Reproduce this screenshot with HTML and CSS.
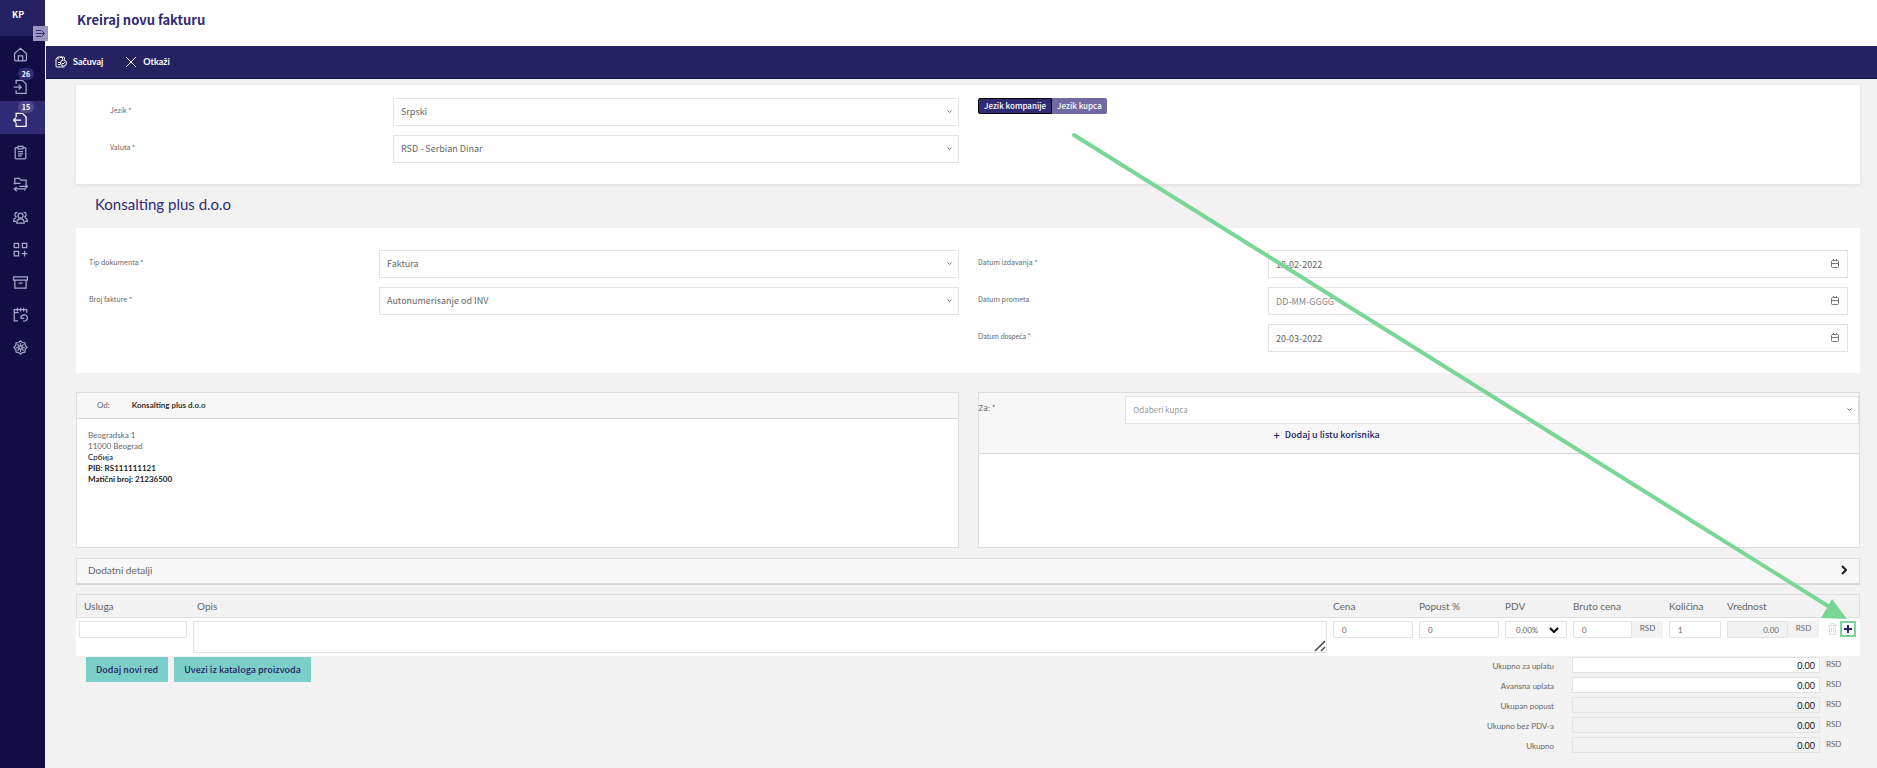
FILE: index.html
```html
<!DOCTYPE html>
<html lang="sr-Latn">
<head>
    <meta charset="UTF-8">
    <meta name="viewport" content="width=device-width, initial-scale=1.0">
    <title>Kreiraj novu fakturu</title>
    <link rel="stylesheet" href="styles.css">
</head>
<body>

    <!-- Sidebar -->
    <nav class="sidebar">
        <div class="brand">KP
            <button class="toggle" aria-label="Meni">
                <svg width="9" height="9" viewBox="0 0 9 9"><path d="M0 1.500h5M0 4.500h8M0 7.500h5M5.500 1.500l3 3-3 3"/></svg>
            </button>
        </div>
        <a href="#" class="nav-item" aria-label="Početna">
            <svg viewBox="0 0 24 24"><path d="M2.500 10.500L12 2l9.500 8.500V20a2 2 0 0 1-2 2h-15a2 2 0 0 1-2-2zM8.500 22v-8h7v8"/></svg>
        </a>
        <a href="#" class="nav-item" aria-label="Ulazne fakture">
            <svg viewBox="0 0 24 24"><path d="M5 8V2h10l6 6v15H5v-5M1 13h12M9 9l4 4-4 4"/></svg>
            <span class="badge">26</span>
        </a>
        <a href="#" class="nav-item active" aria-label="Izlazne fakture">
            <svg viewBox="0 0 24 24"><path d="M5 8V2h10l6 6v15H5v-5M13 13H1M5 9l-4 4 4 4"/></svg>
            <span class="badge">15</span>
        </a>
        <a href="#" class="nav-item" aria-label="Ponude">
            <svg viewBox="0 0 24 24"><path d="M8 4H5a1.500 1.500 0 0 0-1.500 1.500v15A1.500 1.500 0 0 0 5 22h14a1.500 1.500 0 0 0 1.500-1.500v-15A1.500 1.500 0 0 0 19 4h-3M8 2h8v4H8zM8 10.500h8M8 14h8M8 17.500h6"/></svg>
        </a>
        <a href="#" class="nav-item" aria-label="Dokumenti">
            <svg viewBox="0 0 24 24"><path d="M3 12V2h7l2 3h9v8M1 10h11M20 12l3 3-3 3M10 15h13M6 16l-4 3 4 4M2 19h17v3"/></svg>
        </a>
        <a href="#" class="nav-item" aria-label="Klijenti">
            <svg viewBox="0 0 24 24"><circle cx="12" cy="9" r="4"/><path d="M6 21c0-4 2-7 6-7s6 3 6 7zM7 4a3.500 3.500 0 1 0-1 7M17 4a3.500 3.500 0 1 1 1 7M5 12c-3 1-4 3-4 6h4M19 12c3 1 4 3 4 6h-4"/></svg>
        </a>
        <a href="#" class="nav-item" aria-label="Usluge">
            <svg viewBox="0 0 24 24"><path d="M2 2h7v7H2zM15 2h7v7h-7zM2 15h7v7H2zM18.500 14v9M14 18.500h9"/></svg>
        </a>
        <a href="#" class="nav-item" aria-label="Arhiva">
            <svg viewBox="0 0 24 24"><path d="M1 3h22v5H1zM3 8v13h18V8M9 13h6"/></svg>
        </a>
        <a href="#" class="nav-item" aria-label="Ponavljanja">
            <svg viewBox="0 0 24 24"><path d="M8 22H2V4h20v5M2 9h7M7 1v6M12 1v6M17 1v6M13 13v5h5M13 17a5 5 0 1 1 3 5"/></svg>
        </a>
        <a href="#" class="nav-item" aria-label="Podešavanja">
            <svg viewBox="0 0 24 24"><path d="M12 1.500l3 2.500 4 .500.500 4 3 3.500-3 3.500-.500 4-4 .500-3 2.500-3-2.500-4-.500-.500-4-3-3.500 3-3.500.500-4L9 4z"/><circle cx="12" cy="12" r="2.500"/><path d="M12 5v4M12 15v4M5 12h4M15 12h4M7 7l3 3M17 7l-3 3M7 17l3-3M17 17l-3-3"/></svg>
        </a>
    </nav>

    <div class="page">
        <header class="page-header">
            <h1>Kreiraj novu fakturu</h1>
        </header>

        <div class="toolbar">
            <button class="tool">
                <svg viewBox="0 0 24 24"><path d="M10 22H4a2 2 0 0 1-2-2V6l4-4h11a2 2 0 0 1 2 2v3M6 2v5M10 3h5v4M6 13h5M6 17h4"/><circle cx="17" cy="14" r="6"/><path d="M14 14l2 2 4-4M10 22h9"/></svg>
                Sačuvaj
            </button>
            <button class="tool">
                <svg viewBox="0 0 24 24"><path d="M2 2l20 20M22 2L2 22"/></svg>
                Otkaži
            </button>
        </div>

        <main class="content">
            <section class="card settings">
                <div class="column">
                    <div class="field">
                        <label for="language">Jezik *</label>
                        <select id="language"><option>Srpski</option></select>
                    </div>
                    <div class="field">
                        <label for="currency">Valuta *</label>
                        <select id="currency"><option>RSD - Serbian Dinar</option></select>
                    </div>
                </div>
                <div class="column">
                    <div class="switch">
                        <button class="selected">Jezik kompanije</button>
                        <button>Jezik kupca</button>
                    </div>
                </div>
            </section>

            <h2>Konsalting plus d.o.o</h2>

            <section class="card document">
                <div class="column">
                    <div class="field">
                        <label for="docType">Tip dokumenta *</label>
                        <select id="docType"><option>Faktura</option></select>
                    </div>
                    <div class="field">
                        <label for="docNumber">Broj fakture *</label>
                        <select id="docNumber"><option>Autonumerisanje od INV</option></select>
                    </div>
                </div>
                <div class="column">
                    <div class="field">
                        <label for="issueDate">Datum izdavanja *</label>
                        <input type="text" class="date" id="issueDate" value="18-02-2022">
                    </div>
                    <div class="field">
                        <label for="supplyDate">Datum prometa</label>
                        <input type="text" class="date" id="supplyDate" placeholder="DD-MM-GGGG">
                    </div>
                    <div class="field">
                        <label for="dueDate" class="accented">Datum dospeća *</label>
                        <input type="text" class="date" id="dueDate" value="20-03-2022">
                    </div>
                </div>
            </section>

            <div class="parties">
                <section class="party">
                    <div class="party-head from">
                        <span>Od:</span>
                        <strong>Konsalting plus d.o.o</strong>
                    </div>
                    <address>
                        <p>Beogradska 1</p>
                        <p>11000 Beograd</p>
                        <p class="dark">Србија</p>
                        <p class="bold">PIB: RS111111121</p>
                        <p class="bold">Matični broj: 21236500</p>
                    </address>
                </section>
                <section class="party">
                    <div class="party-head to">
                        <div class="buyer">
                            <label for="buyer">Za: *</label>
                            <select id="buyer"><option>Odaberi kupca</option></select>
                        </div>
                        <button class="add-buyer"><span class="plus">+</span>Dodaj u listu korisnika</button>
                    </div>
                </section>
            </div>

            <button class="details">
                Dodatni detalji
                <svg width="6" height="10" viewBox="0 0 6 10"><path d="M1 1l4 4-4 4"/></svg>
            </button>

            <!-- Invoice items -->
            <table class="items">
                <thead>
                    <tr>
                        <th class="col-service">Usluga</th>
                        <th class="col-desc">Opis</th>
                        <th class="col-price">Cena</th>
                        <th class="col-price">Popust %</th>
                        <th class="col-vat">PDV</th>
                        <th class="col-gross">Bruto cena</th>
                        <th class="col-qty">Količina</th>
                        <th class="col-value">Vrednost</th>
                        <th class="col-actions"></th>
                    </tr>
                </thead>
                <tbody>
                    <tr>
                        <td><input type="text" aria-label="Usluga"></td>
                        <td><textarea aria-label="Opis"></textarea></td>
                        <td><input type="text" value="0" aria-label="Cena"></td>
                        <td><input type="text" value="0" aria-label="Popust %"></td>
                        <td><select aria-label="PDV"><option>0.00%</option></select></td>
                        <td><div class="money"><input type="text" value="0" aria-label="Bruto cena"><span>RSD</span></div></td>
                        <td><input type="text" value="1" aria-label="Količina"></td>
                        <td><div class="money"><input type="text" class="locked" value="0.00" readonly aria-label="Vrednost"><span>RSD</span></div></td>
                        <td>
                            <div class="actions">
                                <button class="remove" aria-label="Obriši">
                                    <svg width="9" height="12" viewBox="0 0 9 12"><path d="M0 2.500h9M3 2V.500h3V2M1.500 3v8.500h6V3M3.500 4.500v5M5.500 4.500v5"/></svg>
                                </button>
                                <button class="add" aria-label="Dodaj">
                                    <svg width="8" height="8" viewBox="0 0 8 8"><path d="M4 0v8M0 4h8"/></svg>
                                </button>
                            </div>
                        </td>
                    </tr>
                </tbody>
            </table>

            <div class="bottom">
                <div class="buttons">
                    <button>Dodaj novi red</button>
                    <button>Uvezi iz kataloga proizvoda</button>
                </div>
                <div class="totals">
                    <label for="toPay">Ukupno za uplatu</label>
                    <input type="text" id="toPay" value="0.00"><span>RSD</span>
                    <label for="advance">Avansna uplata</label>
                    <input type="text" id="advance" value="0.00"><span>RSD</span>
                    <label for="discount">Ukupan popust</label>
                    <input type="text" id="discount" value="0.00" readonly><span>RSD</span>
                    <label for="net">Ukupno bez PDV-a</label>
                    <input type="text" id="net" value="0.00" readonly><span>RSD</span>
                    <label for="total">Ukupno</label>
                    <input type="text" id="total" value="0.00" readonly><span>RSD</span>
                </div>
            </div>
        </main>
    </div>

    <!-- Arrow that points to the add button -->
    <svg class="pointer" width="780" height="492" viewBox="0 0 780 492">
        <path class="line" d="M4 5L758 476"/>
        <path class="head" d="M777 489L751 488L762 469Z"/>
    </svg>

</body>
</html>
```
FILE: styles.css
```css
* {
    box-sizing: border-box;
}

body {
    margin: 0;
    display: flex;
    position: relative;
    min-height: 100vh;
    background-color: #f2f2f2;
    font-family: "Noto Sans CJK SC", "Noto Sans", sans-serif;
    font-size: 9px;
    line-height: 12px;
    color: #666666;
}

button, input, select, textarea {
    margin: 0;
    padding: 0;
    border: none;
    font: inherit;
    color: inherit;
}

button {
    background: none;
    cursor: pointer;
}

svg {
    fill: none;
    stroke: currentColor;
}

/* Sidebar */
.sidebar {
    width: 45px;
    flex: none;
    background-color: #120d45;
    color: #a9a6cb;
}

.brand {
    position: relative;
    height: 36px;
    padding: 9px 12px;
    background-color: #262262;
    color: #ffffff;
    font-size: 9px;
    font-weight: bold;
}

.toggle {
    position: absolute;
    left: 33px;
    top: 26px;
    z-index: 1;
    width: 15px;
    height: 15px;
    display: flex;
    align-items: center;
    justify-content: center;
    background-color: #9a95c2;
    color: #312a75;
}

.nav-item {
    position: relative;
    display: flex;
    height: 33px;
    padding: 11px 13px 0;
    color: inherit;
}

.brand + .nav-item,
.active ~ .nav-item:nth-child(odd) {
    height: 32px;
}

.nav-item svg {
    width: 15px;
    height: 15px;
    stroke-width: 2;
}

.nav-item.active {
    background-color: #312a75;
    color: #ffffff;
}

.badge {
    position: absolute;
    left: 18px;
    top: 0;
    width: 16px;
    height: 12px;
    border-radius: 6px;
    background-color: #312a75;
    color: #ffffff;
    font-size: 7px;
    font-weight: bold;
    text-align: center;
}

.active .badge {
    background-color: #504a8c;
}

/* Header and toolbar */
.page {
    flex: 1;
    min-width: 0;
}

.page-header {
    height: 46px;
    padding: 10px 32px;
    background-color: #ffffff;
}

h1 {
    margin: 0;
    font-size: 13px;
    line-height: 20px;
    color: #312a75;
}

.toolbar {
    display: flex;
    gap: 22px;
    height: 33px;
    margin-left: 1px;
    padding: 0 9px;
    background-color: #262262;
    border-bottom: 1px solid #120d45;
    color: #ffffff;
    font-family: Lato, sans-serif;
}

.tool {
    display: flex;
    align-items: center;
    gap: 6px;
    font-weight: bold;
}

.tool svg {
    width: 12px;
    height: 12px;
    stroke-width: 2;
}

/* Content */
.content {
    padding: 6px 17px 12px 31px;
}

.card {
    display: grid;
    grid-template-columns: 1fr 1fr;
    gap: 19px;
    background-color: #ffffff;
}

.settings {
    min-height: 99px;
    padding: 13px 12px 13px 34px;
    grid-template-columns: 849fr 870fr;
    border-radius: 2px;
    box-shadow: 0 1px 4px rgba(0, 0, 0, 0.1);
}

.document {
    min-height: 145px;
    padding: 22px 12px 21px 13px;
}

.column {
    display: flex;
    flex-direction: column;
    gap: 9px;
}

.field {
    display: grid;
    grid-template-columns: 1fr 2fr;
}

.field label {
    padding-top: 6px;
    font-size: 7px;
}

.field .accented {
    font-family: Lato, sans-serif;
}

.field select,
.field input,
.buyer select {
    width: 100%;
    height: 28px;
    padding: 0 7px;
    border: 1px solid #e2e2e2;
    appearance: none;
    background: #ffffff url("data:image/svg+xml,%3Csvg xmlns='http://www.w3.org/2000/svg' width='5' height='4' fill='none' stroke='%23777'%3E%3Cpath d='M.500.500l2 2 2-2'/%3E%3C/svg%3E") no-repeat right 6px center;
}

.field .date {
    background-image: url("data:image/svg+xml,%3Csvg xmlns='http://www.w3.org/2000/svg' width='8' height='9' fill='none' stroke='%23777'%3E%3Crect x='.500' y='1.500' width='7' height='7' rx='1'/%3E%3Cpath d='M0 4.500h8M2.500 0v2M5.500 0v2'/%3E%3C/svg%3E");
    background-position: right 8px top 8px;
}

.date::placeholder {
    color: #888888;
}

.switch {
    display: flex;
}

.switch button {
    height: 16px;
    padding: 0 5px;
    border-radius: 0 2px 2px 0;
    background-color: #7069a2;
    color: #ffffff;
    font-weight: 500;
    font-size: 8px;
    line-height: 12px;
}

.switch .selected {
    border: 1px solid #000000;
    border-radius: 2px 0 0 2px;
    background-color: #312a75;
}

h2 {
    margin: 0;
    padding: 8px 19px 12px;
    font-family: Lato, sans-serif;
    font-size: 15px;
    font-weight: normal;
    line-height: 24px;
    color: #312a75;
}

/* From / to */
.parties {
    display: grid;
    grid-template-columns: 1fr 1fr;
    gap: 19px;
    margin-top: 19px;
}

.party {
    min-height: 156px;
    border: 1px solid #dddddd;
    background-color: #ffffff;
}

.party-head {
    background-color: #f7f7f7;
    border-bottom: 1px solid #d8d8d8;
}

.from {
    display: flex;
    gap: 22px;
    padding: 6px 20px 7px;
    font-family: Lato, sans-serif;
    font-size: 8px;
}

.from strong {
    color: #333333;
}

address {
    padding: 11px;
    font-family: Lato, sans-serif;
    font-size: 8px;
    font-style: normal;
    line-height: 11px;
}

address p {
    margin: 0;
}

address .dark {
    color: #111111;
}

address .bold {
    color: #222222;
    font-weight: bold;
}

.to {
    height: 61px;
    padding-top: 3px;
}

.buyer {
    display: grid;
    grid-template-columns: 1fr 5fr;
}

.buyer label {
    padding-top: 6px;
    font-size: 8px;
}

.buyer select {
    color: #999999;
    font-size: 8px;
}

.add-buyer {
    display: flex;
    gap: 5px;
    margin: 5px auto 0 295px;
    color: #262262;
    font-weight: 500;
}

.plus {
    font-size: 11px;
}

.details {
    display: flex;
    align-items: center;
    justify-content: space-between;
    width: 100%;
    height: 27px;
    margin: 10px 0 9px;
    padding: 0 12px 3px 11px;
    border: 1px solid #dddddd;
    border-bottom: 2px solid #d8d8d8;
    background-color: #f7f7f7;
    font-family: Lato, sans-serif;
    font-size: 10px;
}

.details svg {
    color: #222222;
    stroke-width: 2;
}

/* Items */
.items {
    width: 100%;
    table-layout: fixed;
    border-spacing: 0;
    background-color: #ffffff;
    font-family: Lato, sans-serif;
    font-size: 8px;
}

.items th {
    height: 24px;
    padding: 0 3px;
    border: solid #dddddd;
    border-width: 1px 0;
    background-color: #f2f2f2;
    font-size: 10px;
    font-weight: normal;
    text-align: left;
}

.items th:first-child {
    padding-left: 7px;
    border-left-width: 1px;
}

.items .col-desc {
    padding-left: 7px;
}

.items th:last-child {
    border-right-width: 1px;
}

.col-service { width: 114px; }
.col-price { width: 86px; }
.col-vat { width: 68px; }
.col-gross { width: 96px; }
.col-qty { width: 58px; }
.col-value { width: 98px; }
.col-actions { width: 38px; }

.items td {
    padding: 3px;
    vertical-align: top;
}

.items input,
.items select,
.items textarea {
    display: block;
    width: 100%;
    height: 17px;
    padding: 0 8px;
    border: 1px solid #e2e2e2;
    border-radius: 1px;
    background-color: #ffffff;
}

.items textarea {
    height: 32px;
}

.items textarea::-webkit-resizer {
    background: url("data:image/svg+xml,%3Csvg xmlns='http://www.w3.org/2000/svg' width='12' height='12' fill='none' stroke='%23444'%3E%3Cpath stroke-width='1.500' d='M1 11L11 1M7 11l4-4'/%3E%3C/svg%3E") no-repeat right bottom;
}

.items select {
    padding: 0 10px;
    appearance: none;
    background: #ffffff url("data:image/svg+xml,%3Csvg xmlns='http://www.w3.org/2000/svg' width='10' height='6' fill='none' stroke='black' stroke-width='2'%3E%3Cpath d='M1 1l4 4 4-4'/%3E%3C/svg%3E") no-repeat right 7px center;
}

.money {
    display: flex;
}

.money span {
    flex: none;
    width: 31px;
    height: 17px;
    background-color: #f2f2f2;
    line-height: 15px;
    text-align: center;
}

.items .locked {
    background-color: #f2f2f2;
    text-align: right;
}

.actions {
    display: flex;
    align-items: center;
    justify-content: flex-end;
    gap: 3px;
    margin-right: 1px;
}

.remove {
    display: flex;
    color: #dddddd;
}

.add {
    display: flex;
    padding: 2px;
    border: 2px solid #7ad694;
    color: #262262;
}

.add svg {
    stroke-width: 2;
}

/* Buttons and totals */
.bottom {
    display: flex;
    justify-content: space-between;
    padding: 1px 18px 0 10px;
}

.buttons {
    display: flex;
    align-items: flex-start;
    gap: 6px;
}

.buttons button {
    height: 25px;
    padding: 0 10px;
    background-color: #7bcfc8;
    color: #262262;
    font-weight: 500;
}

.totals {
    display: grid;
    grid-template-columns: auto 248px 16px;
    column-gap: 6px;
    row-gap: 4px;
    font-family: Lato, sans-serif;
    font-size: 8px;
}

.totals label {
    padding: 3px 12px 0 0;
    text-align: right;
}

.totals span {
    padding-top: 1px;
}

.totals input {
    height: 16px;
    padding: 0 4px;
    border: 1px solid #e2e2e2;
    border-radius: 1px;
    background-color: #ffffff;
    color: #111111;
    font-size: 9px;
    text-align: right;
}

.totals input:read-only {
    background-color: #f2f2f2;
}

.pointer {
    position: absolute;
    right: 27px;
    top: 130px;
    pointer-events: none;
}

.pointer .line {
    stroke: #7ad694;
    stroke-width: 4;
    stroke-linecap: round;
}

.pointer .head {
    fill: #7ad694;
    stroke: none;
}
```
